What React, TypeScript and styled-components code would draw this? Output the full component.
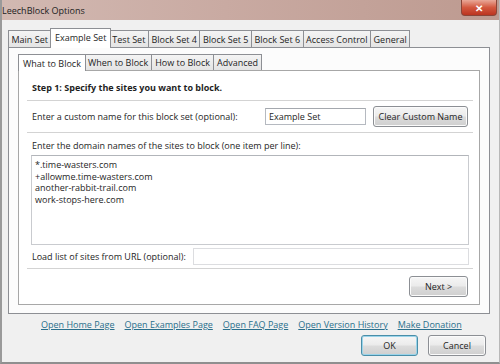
import styled, { createGlobalStyle } from 'styled-components';

const GlobalStyle = createGlobalStyle`
  html, body {
    margin: 0;
    padding: 0;
    background: #f0f0f0;
  }
  body {
    font-family: 'Open Sans', 'Noto Sans', sans-serif;
    font-size: 9px;
    color: #1e1e1e;
  }
`;

const Window = styled.div`
  width: 500px;
  height: 364px;
  box-sizing: border-box;
  display: flex;
  flex-direction: column;
  background: #f0f0f0;
  border-left: 2px solid #9a9a9a;
  border-right: 1px solid #b8b8b8;
  border-bottom: 2px solid #8f8f8f;
  overflow: hidden;
`;

const TitleBar = styled.div`
  height: 20px;
  flex-shrink: 0;
  display: flex;
  align-items: flex-start;
  justify-content: space-between;
  background: linear-gradient(90deg, #d2b9b2 0%, #c9aaa2 45%, #bd9a90 100%);
  margin-left: -2px;
  margin-right: -1px;
`;

const Title = styled.span`
  padding: 4px 0 0 2px;
  font-size: 9px;
  color: #222;
`;

const CloseButton = styled.div`
  width: 34px;
  height: 15px;
  margin-right: 3px;
  display: flex;
  align-items: center;
  justify-content: center;
  background: linear-gradient(180deg, #e9a898 0%, #d3583f 50%, #bb3420 100%);
  border: 1px solid #8a4538;
  border-top: none;
  border-radius: 0 0 4px 4px;
  color: #fff;
  font-size: 10px;
  font-weight: 700;
`;

const Body = styled.div`
  flex: 1;
  display: flex;
  flex-direction: column;
  padding: 8px 9px 0 5px;
`;

const TabRow = styled.div<{ $inset?: boolean }>`
  display: flex;
  align-items: flex-end;
  height: ${({ $inset }) => ($inset ? '16px' : '19px')};
  padding-left: 1px;
`;

const Tab = styled.div<{ $active?: boolean }>`
  box-sizing: border-box;
  height: 17px;
  padding: 0 2.5px;
  display: flex;
  align-items: center;
  border: 1px solid #8d8f94;
  border-bottom: none;
  border-left-width: 0;
  background: linear-gradient(180deg, #f4f4f4 0%, #e4e4e4 100%);
  position: relative;
  font-size: 9px;
  white-space: nowrap;
  &:first-child {
    border-left-width: 1px;
  }
  ${({ $active }) =>
    $active
      ? `
    background: #ffffff;
    z-index: 1;
    border-left-width: 1px;
    margin: 0 -1px -1px -1px;
    height: 20px;
    padding: 0 3.5px 2px 3.5px;
  `
      : ''}
`;

const InnerTab = styled(Tab)`
  height: 16px;
  padding: 0 3px;
  ${({ $active }) => ($active ? 'height: 17px; padding: 0 4px;' : '')}
`;

const OuterPanel = styled.div`
  box-sizing: border-box;
  height: 267px;
  margin-left: 1px;
  border: 1px solid #8d8f94;
  background: #fcfcfc;
  padding: 6px 9px 0 9px;
  display: flex;
  flex-direction: column;
`;

const InnerPanel = styled.div`
  box-sizing: border-box;
  height: 235px;
  border: 1px solid #a7a7a7;
  background: #ffffff;
  padding: 0 6px 0 8px;
  display: flex;
  flex-direction: column;
`;

const Row = styled.div<{ $height: number; $divider?: boolean; $end?: boolean }>`
  box-sizing: border-box;
  height: ${({ $height }) => $height}px;
  display: flex;
  align-items: center;
  justify-content: ${({ $end }) => ($end ? 'flex-end' : 'flex-start')};
  padding: 0 5px;
  border-bottom: ${({ $divider }) => ($divider ? '1px solid #d3d3d3' : 'none')};
`;

const StepText = styled.span`
  font-weight: 700;
  font-size: 9px;
  padding-top: 3px;
`;

const Label = styled.span`
  font-size: 9px;
  white-space: nowrap;
`;

const TextInput = styled.div<{ $width: number }>`
  box-sizing: border-box;
  width: ${({ $width }) => $width}px;
  height: 17px;
  border: 1px solid #b5b9c0;
  border-top-color: #a4a8ae;
  background: #fff;
  font-size: 9px;
  padding: 0 3px;
  display: flex;
  align-items: center;
`;

const NameInput = styled(TextInput)`
  margin-left: auto;
  margin-right: 7px;
`;

const Button = styled.div<{ $width: number; $focus?: boolean }>`
  box-sizing: border-box;
  width: ${({ $width }) => $width}px;
  height: 21px;
  display: flex;
  align-items: center;
  justify-content: center;
  border: 1px solid ${({ $focus }) => ($focus ? '#4a8ea8' : '#8c8f94')};
  border-radius: 3px;
  background: linear-gradient(180deg, #f6f6f6 0%, #ebebeb 48%, #dcdcdc 52%, #cfcfcf 100%);
  box-shadow: inset 0 0 0 1px ${({ $focus }) => ($focus ? '#9ad4ea' : '#fbfbfb')};
  font-size: 9px;
  white-space: nowrap;
`;

const DomainsSection = styled.div`
  box-sizing: border-box;
  height: 136px;
  border-bottom: 1px solid #d3d3d3;
  display: flex;
  flex-direction: column;
  padding: 6px 4px 0 4px;
`;

const DomainsLabel = styled(Label)`
  padding-left: 1px;
  margin-bottom: 3px;
`;

const DomainList = styled.div`
  box-sizing: border-box;
  height: 90px;
  border: 1px solid #c9cbcf;
  border-top-color: #b2b5ba;
  background: #fff;
  padding: 3px 3px;
  font-size: 9px;
  line-height: 11.5px;
`;

const UrlRow = styled.div`
  display: flex;
  align-items: center;
  gap: 7px;
  margin-top: 3px;
  padding-left: 1px;
`;

const UrlInput = styled(TextInput)`
  flex: 1;
  border-color: #dcdde0;
`;

const Links = styled.div`
  display: flex;
  gap: 10px;
  padding: 3px 0 0 34px;
  height: 14px;
  align-items: center;
`;

const Link = styled.span`
  color: #2a6f8c;
  text-decoration: underline;
  font-size: 9px;
  white-space: nowrap;
`;

const Footer = styled.div`
  display: flex;
  justify-content: flex-end;
  gap: 10px;
  padding-top: 4px;
  padding-right: 4px;
`;

const outerTabs = [
  'Main Set',
  'Example Set',
  'Test Set',
  'Block Set 4',
  'Block Set 5',
  'Block Set 6',
  'Access Control',
  'General',
];

const innerTabs = ['What to Block', 'When to Block', 'How to Block', 'Advanced'];

const domains = [
  '*.time-wasters.com',
  '+allowme.time-wasters.com',
  'another-rabbit-trail.com',
  'work-stops-here.com',
];

const links = [
  'Open Home Page',
  'Open Examples Page',
  'Open FAQ Page',
  'Open Version History',
  'Make Donation',
];

const App = (): JSX.Element => {
  return (
    <>
      <GlobalStyle />
      <Window>
        <TitleBar>
          <Title>LeechBlock Options</Title>
          <CloseButton>✕</CloseButton>
        </TitleBar>
        <Body>
          <TabRow>
            {outerTabs.map((t) => (
              <Tab key={t} $active={t === 'Example Set'}>
                {t}
              </Tab>
            ))}
          </TabRow>
          <OuterPanel>
            <TabRow $inset>
              {innerTabs.map((t) => (
                <InnerTab key={t} $active={t === 'What to Block'}>
                  {t}
                </InnerTab>
              ))}
            </TabRow>
            <InnerPanel>
              <Row $height={30} $divider>
                <StepText>Step 1: Specify the sites you want to block.</StepText>
              </Row>
              <Row $height={32} $divider>
                <Label>Enter a custom name for this block set (optional):</Label>
                <NameInput $width={101}>Example Set</NameInput>
                <Button $width={95}>Clear Custom Name</Button>
              </Row>
              <DomainsSection>
                <DomainsLabel>Enter the domain names of the sites to block (one item per line):</DomainsLabel>
                <DomainList>
                  {domains.map((d) => (
                    <div key={d}>{d}</div>
                  ))}
                </DomainList>
                <UrlRow>
                  <Label>Load list of sites from URL (optional):</Label>
                  <UrlInput $width={0} />
                </UrlRow>
              </DomainsSection>
              <Row $height={34} $end>
                <Button $width={59}>Next &gt;</Button>
              </Row>
            </InnerPanel>
          </OuterPanel>
          <Links>
            {links.map((l) => (
              <Link key={l}>{l}</Link>
            ))}
          </Links>
          <Footer>
            <Button $width={57} $focus>
              OK
            </Button>
            <Button $width={58}>Cancel</Button>
          </Footer>
        </Body>
      </Window>
    </>
  );
};

export default App;
